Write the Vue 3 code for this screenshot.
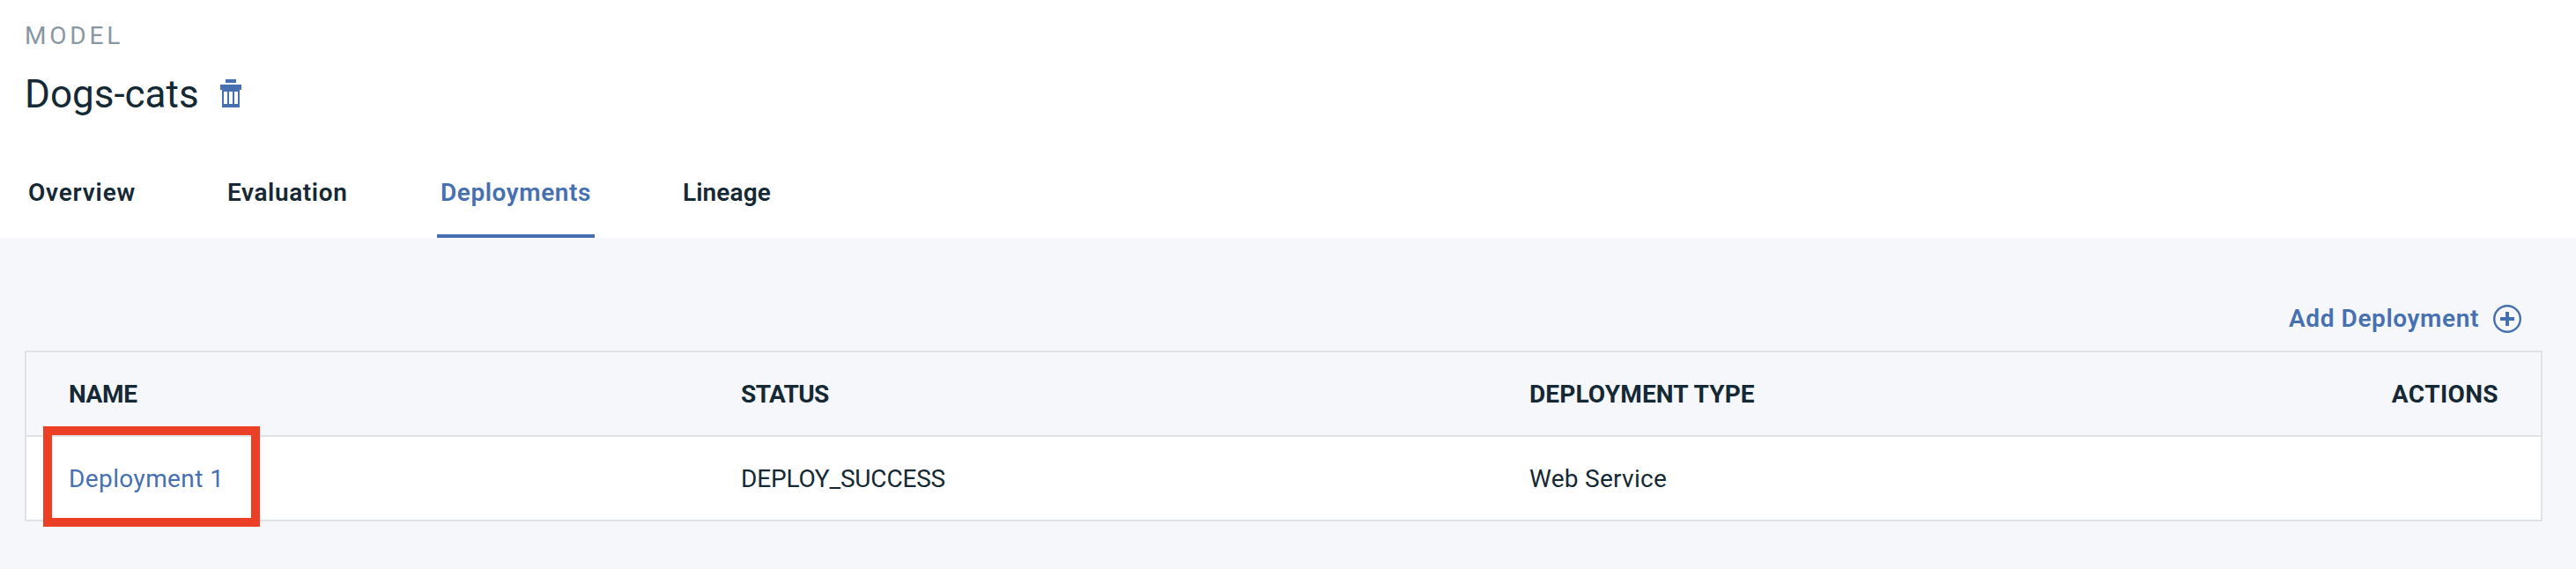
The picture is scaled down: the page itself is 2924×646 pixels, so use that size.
<script setup>
const tabs = [
  { id: 'overview', label: 'Overview' },
  { id: 'evaluation', label: 'Evaluation' },
  { id: 'deployments', label: 'Deployments', active: true },
  { id: 'lineage', label: 'Lineage' },
]
</script>

<template>
  <main class="page">
    <header class="head">
      <div class="kicker">MODEL</div>
      <div class="title-row">
        <h1 class="title">Dogs-cats</h1>
        <svg class="trash" width="24" height="32" viewBox="0 0 24 32" shape-rendering="crispEdges">
          <path fill="#4770b0" fill-rule="evenodd" d="M6 0H18V4H6ZM0 6H24V12H22V32H2V12H0ZM4 14V28H8V14ZM10 14V28H14V14ZM16 14V28H20V14Z" />
        </svg>
      </div>
      <nav class="tabs">
        <a v-for="t in tabs" :key="t.id" class="tab" :class="[t.id, { active: t.active }]">{{ t.label }}</a>
      </nav>
    </header>
    <section class="panel">
      <div class="toolbar">
        <span class="add">Add Deployment</span>
        <svg width="32" height="32" viewBox="0 0 32 32" fill="none" stroke="#4770b0">
          <circle cx="16" cy="16" r="14.8" stroke-width="2.4" />
          <path d="M16 8V24M8 16H24" stroke-width="4" />
        </svg>
      </div>
      <div class="table">
        <div class="row header">
          <span class="h-name">NAME</span>
          <span class="h-status">STATUS</span>
          <span class="h-type">DEPLOYMENT TYPE</span>
          <span class="h-actions">ACTIONS</span>
        </div>
        <div class="row">
          <span class="name">Deployment 1<i class="highlight"></i></span>
          <span class="status">DEPLOY_SUCCESS</span>
          <span class="type">Web Service</span>
          <span></span>
        </div>
      </div>
    </section>
  </main>
</template>

<style>
body { background: #fff; }
</style>

<style scoped>
.page { height: 646px; display: flex; flex-direction: column; font: 400 28px/36px Roboto, sans-serif; color: #152935; white-space: nowrap; overflow: hidden; }
.head { height: 270px; box-sizing: border-box; padding: 23px 28px 0; display: flex; flex-direction: column; }
.kicker { color: #8897a2; letter-spacing: 3.8px; }
.title-row { display: flex; height: 60px; margin-top: 18px; }
.title { margin: 0; width: 222px; font-size: 44px; line-height: 60px; font-weight: 400; letter-spacing: 0; }
.trash { margin-top: 13px; }
.tabs { display: flex; margin-top: auto; height: 76px; }
.tab { box-sizing: border-box; height: 76px; padding: 7px 0 0 4px; font-weight: 600; border-bottom: 4px solid transparent; }
.overview { width: 126px; margin-right: 100px; letter-spacing: 0.8px; }
.evaluation { width: 136px; margin-right: 106px; letter-spacing: 0.6px; }
.deployments { width: 179px; margin-right: 96px; letter-spacing: 0.57px; }
.lineage { letter-spacing: 0.1px; }
.active { color: #4770b0; border-color: #4770b0; }
.panel { flex: 1; background: #f5f7fb; padding: 0 38px 0 28px; }
.toolbar { height: 128px; box-sizing: border-box; padding: 76px 24px 0 0; display: flex; justify-content: flex-end; align-items: flex-start; color: #4770b0; }
.add { width: 232px; line-height: 32px; font-weight: 600; letter-spacing: 0.6px; }
.table { border: 2px solid #dfe3e6; height: 194px; box-sizing: border-box; }
.row { display: grid; grid-template-columns: 763px 895px 1fr auto; height: 94px; line-height: 96px; padding: 0 48px; background: #fff; }
.header { background: #f5f7fb; font-weight: 700; border-bottom: 2px solid #dfe3e6; }
.h-name { letter-spacing: -0.4px; }
.h-status { letter-spacing: -0.6px; }
.h-type { letter-spacing: 0.15px; }
.h-actions { letter-spacing: 0.4px; }
.name { position: relative; color: #4770b0; letter-spacing: 0.4px; }
.highlight { position: absolute; left: -29px; top: -12px; width: 246px; height: 114px; box-sizing: border-box; border: 10px solid #ec4026; }
.status { letter-spacing: -0.19px; }
.type { letter-spacing: 0.28px; }
</style>
